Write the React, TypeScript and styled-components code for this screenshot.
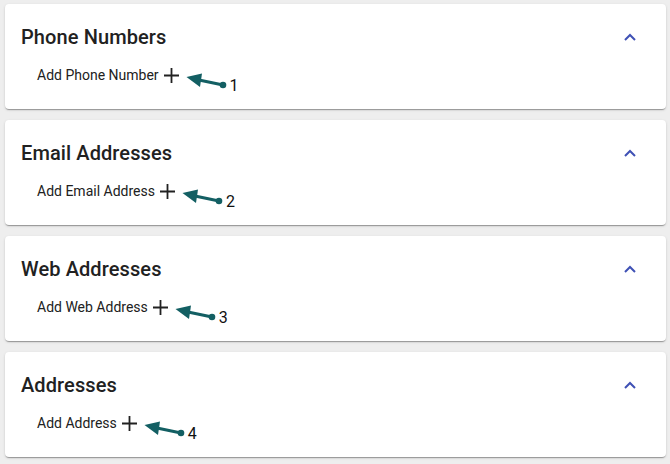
import React from 'react'
import styled, { createGlobalStyle } from 'styled-components'

const GlobalStyle = createGlobalStyle`
	html, body {
		margin: 0;
		padding: 0;
		background: #eeeeee;
		font-family: Roboto, 'Liberation Sans', sans-serif;
	}
`

const StyledPage = styled.div`
	display: flex;
	flex-direction: column;
	gap: 11px;
	padding: 4px 4px 4px 5px;
`
const StyledCard = styled.section`
	background: #ffffff;
	border-radius: 4px;
	height: 105px;
	box-sizing: border-box;
	padding: 17px 16px 0 16px;
	box-shadow: 0px 2px 1px -1px rgba(0, 0, 0, 0.2),
		0px 1px 1px 0px rgba(0, 0, 0, 0.14), 0px 1px 3px 0px rgba(0, 0, 0, 0.12);
`
const StyledHeaderRow = styled.div`
	display: flex;
	align-items: center;
	justify-content: space-between;
	height: 32px;
`
const StyledTitle = styled.h2`
	margin: 0;
	font-size: 20px;
	font-weight: 500;
	color: #212121;
	letter-spacing: 0.1px;
`
const StyledToggle = styled.button`
	display: flex;
	align-items: center;
	justify-content: center;
	width: 24px;
	height: 24px;
	margin-right: 8px;
	padding: 0;
	border: none;
	background: none;
	color: #3f51b5;
`
const StyledAddRow = styled.div`
	display: flex;
	align-items: center;
	margin-top: 10px;
	padding-left: 16px;
	height: 24px;
`
const StyledAddLabel = styled.span`
	font-size: 14px;
	color: #212121;
`
const StyledPlus = styled.span`
	display: flex;
	margin-left: 4px;
	color: #212121;
`
const StyledCallout = styled.span`
	display: flex;
	align-items: center;
	margin-left: 6px;
	margin-top: 9px;
`
const StyledCalloutNumber = styled.span`
	margin-left: 3px;
	margin-top: 13px;
	font-size: 16px;
	line-height: 16px;
	color: #111111;
`

const ChevronUp = () => (
	<svg width="14" height="10" viewBox="0 0 14 10">
		<path d="M2 8 L7 3 L12 8" fill="none" stroke="currentColor" strokeWidth="2" />
	</svg>
)

const Plus = () => (
	<svg width="17" height="17" viewBox="0 0 17 17">
		<path d="M8.5 1 V16 M1 8.5 H16" stroke="currentColor" strokeWidth="1.8" />
	</svg>
)

const Arrow = () => (
	<svg width="41" height="18" viewBox="0 0 41 18">
		<path d="M13 9 L37 14" stroke="#135f63" strokeWidth="3" strokeLinecap="round" />
		<path d="M0.5 6 L16 2.5 L14 16 Z" fill="#135f63" />
		<circle cx="37" cy="14" r="3.3" fill="#135f63" />
	</svg>
)

const sections = [
	{ title: 'Phone Numbers', add: 'Add Phone Number', n: 1 },
	{ title: 'Email Addresses', add: 'Add Email Address', n: 2 },
	{ title: 'Web Addresses', add: 'Add Web Address', n: 3 },
	{ title: 'Addresses', add: 'Add Address', n: 4 },
]

export default function App() {
	return (
		<>
			<GlobalStyle />
			<StyledPage>
				{sections.map((s) => (
					<StyledCard key={s.n}>
						<StyledHeaderRow>
							<StyledTitle>{s.title}</StyledTitle>
							<StyledToggle aria-label="collapse">
								<ChevronUp />
							</StyledToggle>
						</StyledHeaderRow>
						<StyledAddRow>
							<StyledAddLabel>{s.add}</StyledAddLabel>
							<StyledPlus>
								<Plus />
							</StyledPlus>
							<StyledCallout>
								<Arrow />
								<StyledCalloutNumber>{s.n}</StyledCalloutNumber>
							</StyledCallout>
						</StyledAddRow>
					</StyledCard>
				))}
			</StyledPage>
		</>
	)
}
